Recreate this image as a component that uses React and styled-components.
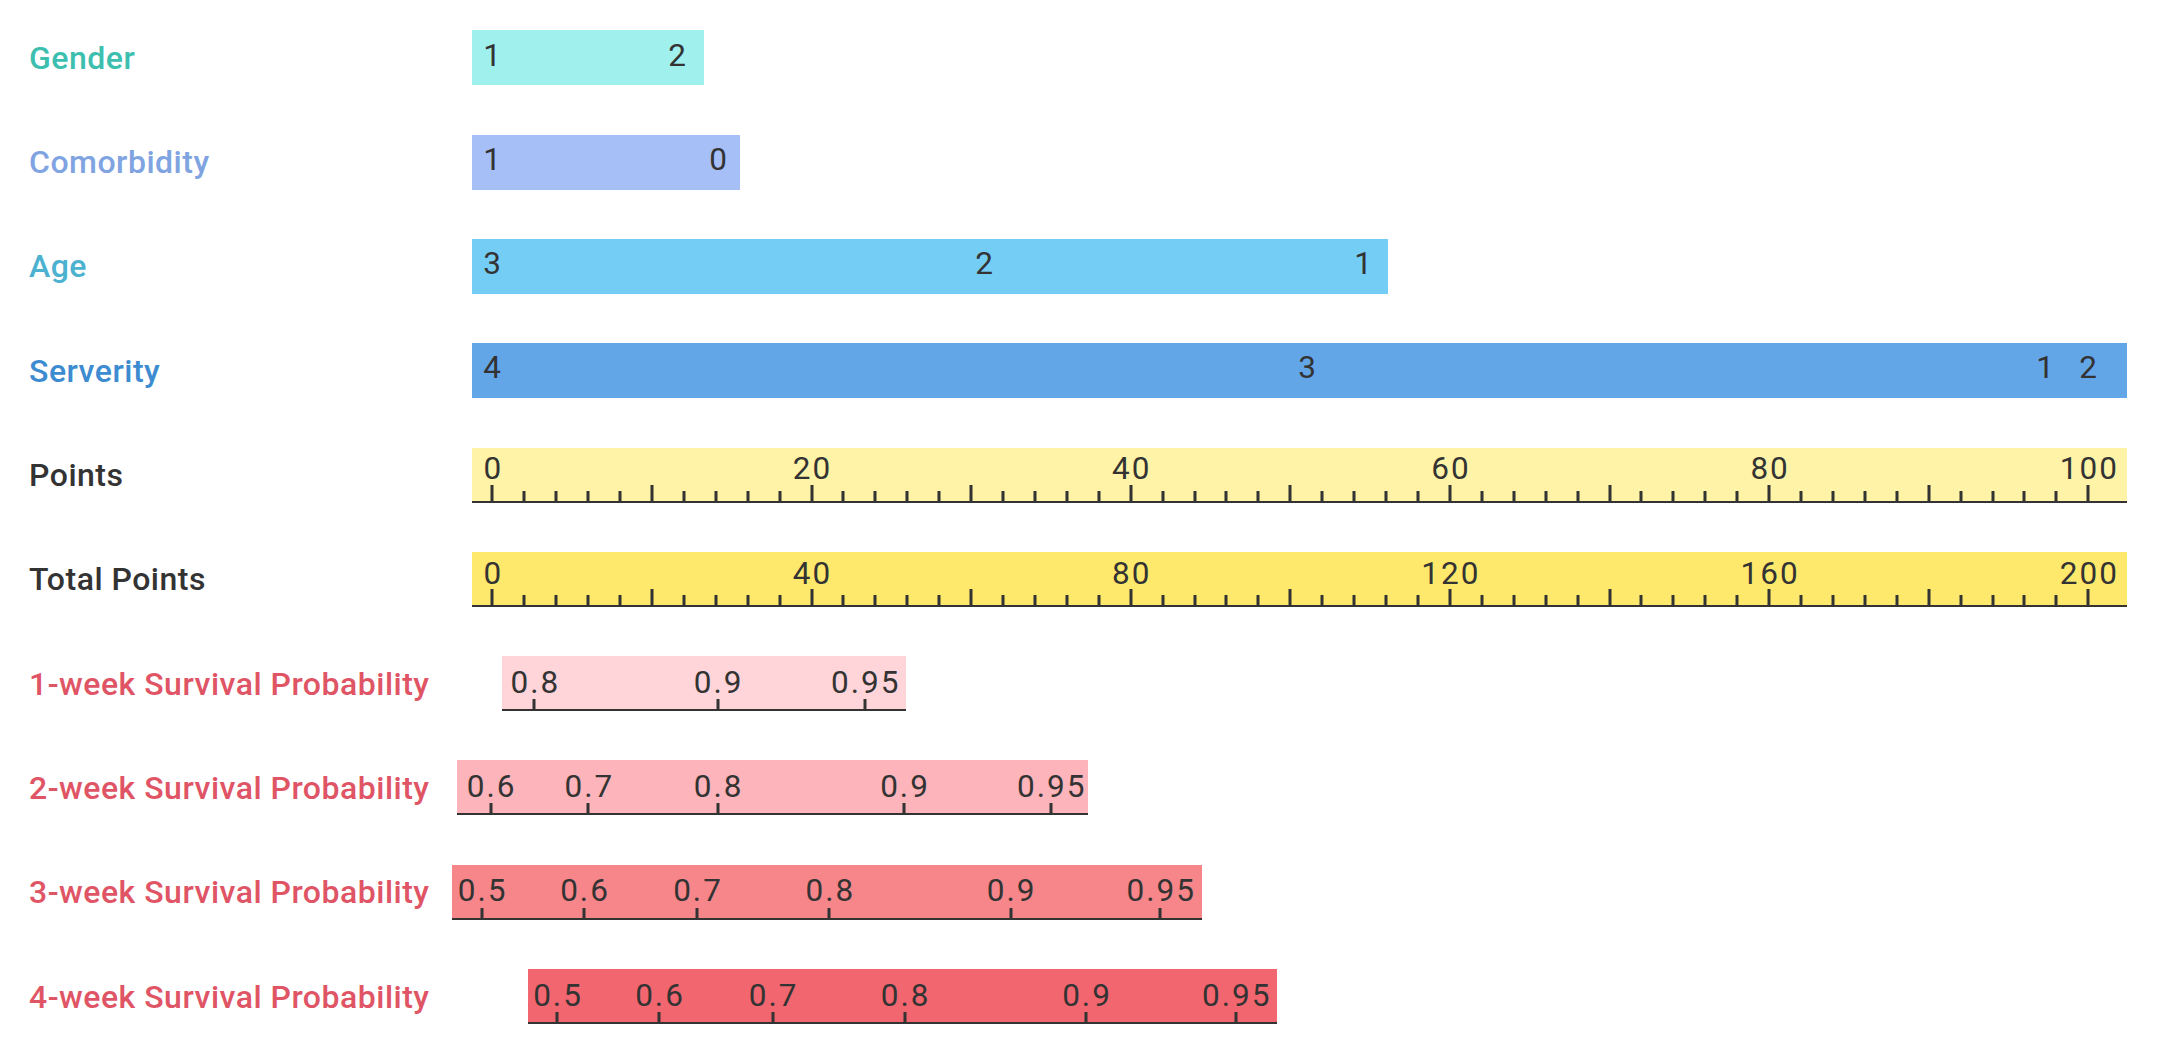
import React from 'react';
import styled, { createGlobalStyle } from 'styled-components';

const GlobalStyle = createGlobalStyle`
  html, body {
    margin: 0;
    padding: 0;
    background: #ffffff;
  }
  body {
    font-family: Roboto, "Liberation Sans", sans-serif;
    color: #333333;
  }
`;

// page x where the track column starts
const ORIGIN = 440;
const INK = '#333333';

const Chart = styled.div`
  display: flex;
  flex-direction: column;
  padding-top: 5.7px;
  width: 2165px;
`;

const Row = styled.div`
  display: flex;
  align-items: center;
  height: 104.3px;
`;

const Label = styled.div`
  flex: 0 0 ${ORIGIN}px;
  box-sizing: border-box;
  padding-left: 29px;
  font-size: 32px;
  font-weight: 500;
  letter-spacing: 0.5px;
  white-space: nowrap;
  color: ${(p) => p.$color};
`;

const Track = styled.div`
  flex: 1;
  display: flex;
  align-items: stretch;
  height: 55px;
`;

const Bar = styled.div`
  position: relative;
  box-sizing: border-box;
  height: 55px;
  background: ${(p) => p.$bg};
  border-bottom: ${(p) => (p.$axis ? `2px solid ${INK}` : 'none')};
`;

const Tick = styled.span`
  position: absolute;
  bottom: 0;
  width: 3px;
  height: ${(p) => p.$h}px;
  background: ${INK};
  transform: translateX(-50%);
`;

const Value = styled.span`
  position: absolute;
  top: ${(p) => p.$top}px;
  font-size: 31.5px;
  line-height: 30px;
  letter-spacing: 2px;
  color: ${INK};
  white-space: nowrap;
  transform: translateX(calc(-50% + 1px));
`;

const ptX = (v) => 492.3 + v * 15.96;

const linearTicks = (step) => {
  const out = [];
  for (let i = 0; i <= 50; i++) {
    out.push({
      x: ptX(i * 2),
      h: i % 5 === 0 ? 16 : 10,
      label: i % 10 === 0 ? String(i * step) : null,
    });
  }
  return out;
};

const rows = [
  {
    name: 'Gender', color: '#3dbfb0', bg: '#a0f0ee', from: 472, to: 704,
    values: [['1', 492], ['2', 677]],
  },
  {
    name: 'Comorbidity', color: '#80a4e1', bg: '#a6bff7', from: 472, to: 740,
    values: [['1', 492], ['0', 718]],
  },
  {
    name: 'Age', color: '#4db1d0', bg: '#74cdf4', from: 472, to: 1388,
    values: [['3', 492], ['2', 984], ['1', 1363]],
  },
  {
    name: 'Serverity', color: '#3d8bd0', bg: '#63a6e8', from: 472, to: 2127,
    values: [['4', 492], ['3', 1307], ['1', 2045], ['2', 2088]],
  },
  {
    name: 'Points', color: '#333333', bg: '#fef3a6', from: 472, to: 2127,
    axis: linearTicks(2), top: 6.7,
  },
  {
    name: 'Total Points', color: '#333333', bg: '#fee96c', from: 472, to: 2127,
    axis: linearTicks(4), top: 6.7,
  },
  {
    name: '1-week Survival Probability', color: '#e05565', bg: '#ffd5da', from: 502, to: 906,
    axis: [['0.8', 534.3], ['0.9', 717.7], ['0.95', 864.7]], top: 11.5,
  },
  {
    name: '2-week Survival Probability', color: '#e05565', bg: '#fdb4ba', from: 457, to: 1088,
    axis: [['0.6', 490.7], ['0.7', 588.3], ['0.8', 717.7], ['0.9', 904], ['0.95', 1050.7]], top: 11.5,
  },
  {
    name: '3-week Survival Probability', color: '#e05565', bg: '#f6868a', from: 452, to: 1202,
    axis: [['0.5', 481.7], ['0.6', 584], ['0.7', 697], ['0.8', 829.3], ['0.9', 1010.7], ['0.95', 1160.3]], top: 11.5,
  },
  {
    name: '4-week Survival Probability', color: '#e05565', bg: '#f2666f', from: 528, to: 1277,
    axis: [['0.5', 557], ['0.6', 659], ['0.7', 772.7], ['0.8', 904.7], ['0.9', 1086], ['0.95', 1235.7]], top: 11.5,
  },
];

const normalizeAxis = (axis) =>
  axis.map((t) => (Array.isArray(t) ? { x: t[1], h: 10, label: t[0] } : t));

const ScaleRow = ({ row }) => {
  const { from, to } = row;
  const barStyle = { marginLeft: from - ORIGIN, width: to - from };
  return (
    <Row>
      <Label $color={row.color}>{row.name}</Label>
      <Track>
        <Bar $bg={row.bg} $axis={!!row.axis} style={barStyle}>
          {row.values &&
            row.values.map(([text, x]) => (
              <Value key={text + x} $top={10.2} style={{ left: x - from }}>
                {text}
              </Value>
            ))}
          {row.axis &&
            normalizeAxis(row.axis).map((t, i) => (
              <React.Fragment key={i}>
                <Tick $h={t.h} style={{ left: t.x - from }} />
                {t.label && (
                  <Value $top={row.top} style={{ left: t.x - from }}>
                    {t.label}
                  </Value>
                )}
              </React.Fragment>
            ))}
        </Bar>
      </Track>
    </Row>
  );
};

const App = () => (
  <>
    <GlobalStyle />
    <Chart>
      {rows.map((row) => (
        <ScaleRow key={row.name} row={row} />
      ))}
    </Chart>
  </>
);

export default App;
